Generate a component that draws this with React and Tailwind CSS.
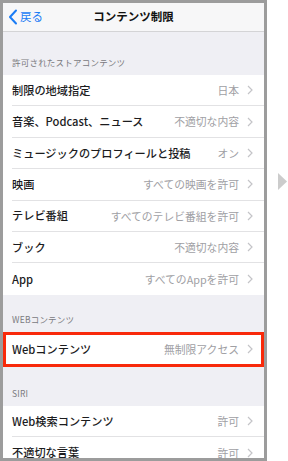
import React from 'react';

const FONT = { fontFamily: '"Noto Sans CJK JP", "Noto Sans", sans-serif' };

const storeRows = [
  { label: '制限の地域指定', value: '日本' },
  { label: '音楽、Podcast、ニュース', value: '不適切な内容' },
  { label: 'ミュージックのプロフィールと投稿', value: 'オン' },
  { label: '映画', value: 'すべての映画を許可' },
  { label: 'テレビ番組', value: 'すべてのテレビ番組を許可' },
  { label: 'ブック', value: '不適切な内容' },
  { label: 'App', value: 'すべてのAppを許可' },
];

const siriRows = [
  { label: 'Web検索コンテンツ', value: '許可' },
  { label: '不適切な言葉', value: '許可' },
];

function Chevron() {
  return (
    <svg width="6" height="10" viewBox="0 0 6 10" className="ml-[8px] shrink-0">
      <path d="M1 1l4 4-4 4" fill="none" stroke="#c4c4c8" strokeWidth="1.2" />
    </svg>
  );
}

function Row({ label, value, last }) {
  return (
    <div className="h-[31.4px] shrink-0 pl-[9px] bg-white">
      <div className={`h-full flex items-center pr-[11px] ${last ? '' : 'border-b border-[#e2e2e4]'}`}>
        <span className="text-[11.2px] text-[#1c1c1e] font-medium flex-1 whitespace-nowrap">{label}</span>
        <span className="text-[10.8px] text-[#a0a0a4] whitespace-nowrap">{value}</span>
        <Chevron />
      </div>
    </div>
  );
}

function SectionHeader({ children, h }) {
  return (
    <div className={`${h} shrink-0 flex items-end pl-[9px] pb-[6px] text-[8.5px] text-[#7a7a7e] tracking-wide`}>
      {children}
    </div>
  );
}

export default function App() {
  return (
    <div className="w-[288px] h-[461px] bg-white flex" style={FONT}>
      <div className="w-[267px] h-full border-[3px] border-[#9c9c9c] bg-[#efeff4] overflow-hidden flex flex-col">
        <div className="h-[29px] shrink-0 bg-[#f7f7f8] border-b border-[#d4d4d6] flex items-center relative">
          <div className="flex items-center pl-[5px] text-[#1a7cf5]">
            <svg width="10" height="16" viewBox="0 0 10 16">
              <path d="M8 1.5L2 8l6 6.5" fill="none" stroke="#1a7cf5" strokeWidth="2" strokeLinecap="round" strokeLinejoin="round" />
            </svg>
            <span className="text-[11.5px] ml-[2px]">戻る</span>
          </div>
          <div className="absolute inset-0 flex items-center justify-center text-[11.5px] font-bold text-[#111]">
            コンテンツ制限
          </div>
        </div>
        <SectionHeader h="h-[43px]">許可されたストアコンテンツ</SectionHeader>
        {storeRows.map((r, i) => (
          <Row key={r.label} {...r} last={i === storeRows.length - 1} />
        ))}
        <SectionHeader h="h-[37px]">WEBコンテンツ</SectionHeader>
        <div className="h-[35px] shrink-0 border-[3px] border-[#f8290a] bg-white flex items-center pl-[6px] pr-[8px]">
          <span className="text-[11.2px] text-[#1c1c1e] font-medium flex-1">Webコンテンツ</span>
          <span className="text-[10.8px] text-[#a0a0a4]">無制限アクセス</span>
          <Chevron />
        </div>
        <SectionHeader h="h-[39px]">SIRI</SectionHeader>
        {siriRows.map((r, i) => (
          <Row key={r.label} {...r} last={i === siriRows.length - 1} />
        ))}
      </div>
      <div className="flex-1 flex items-start pt-[173px] pl-[11px]">
        <svg width="9" height="17" viewBox="0 0 9 17">
          <path d="M0 0L9 8.5 0 17z" fill="#cccccc" />
        </svg>
      </div>
    </div>
  );
}
